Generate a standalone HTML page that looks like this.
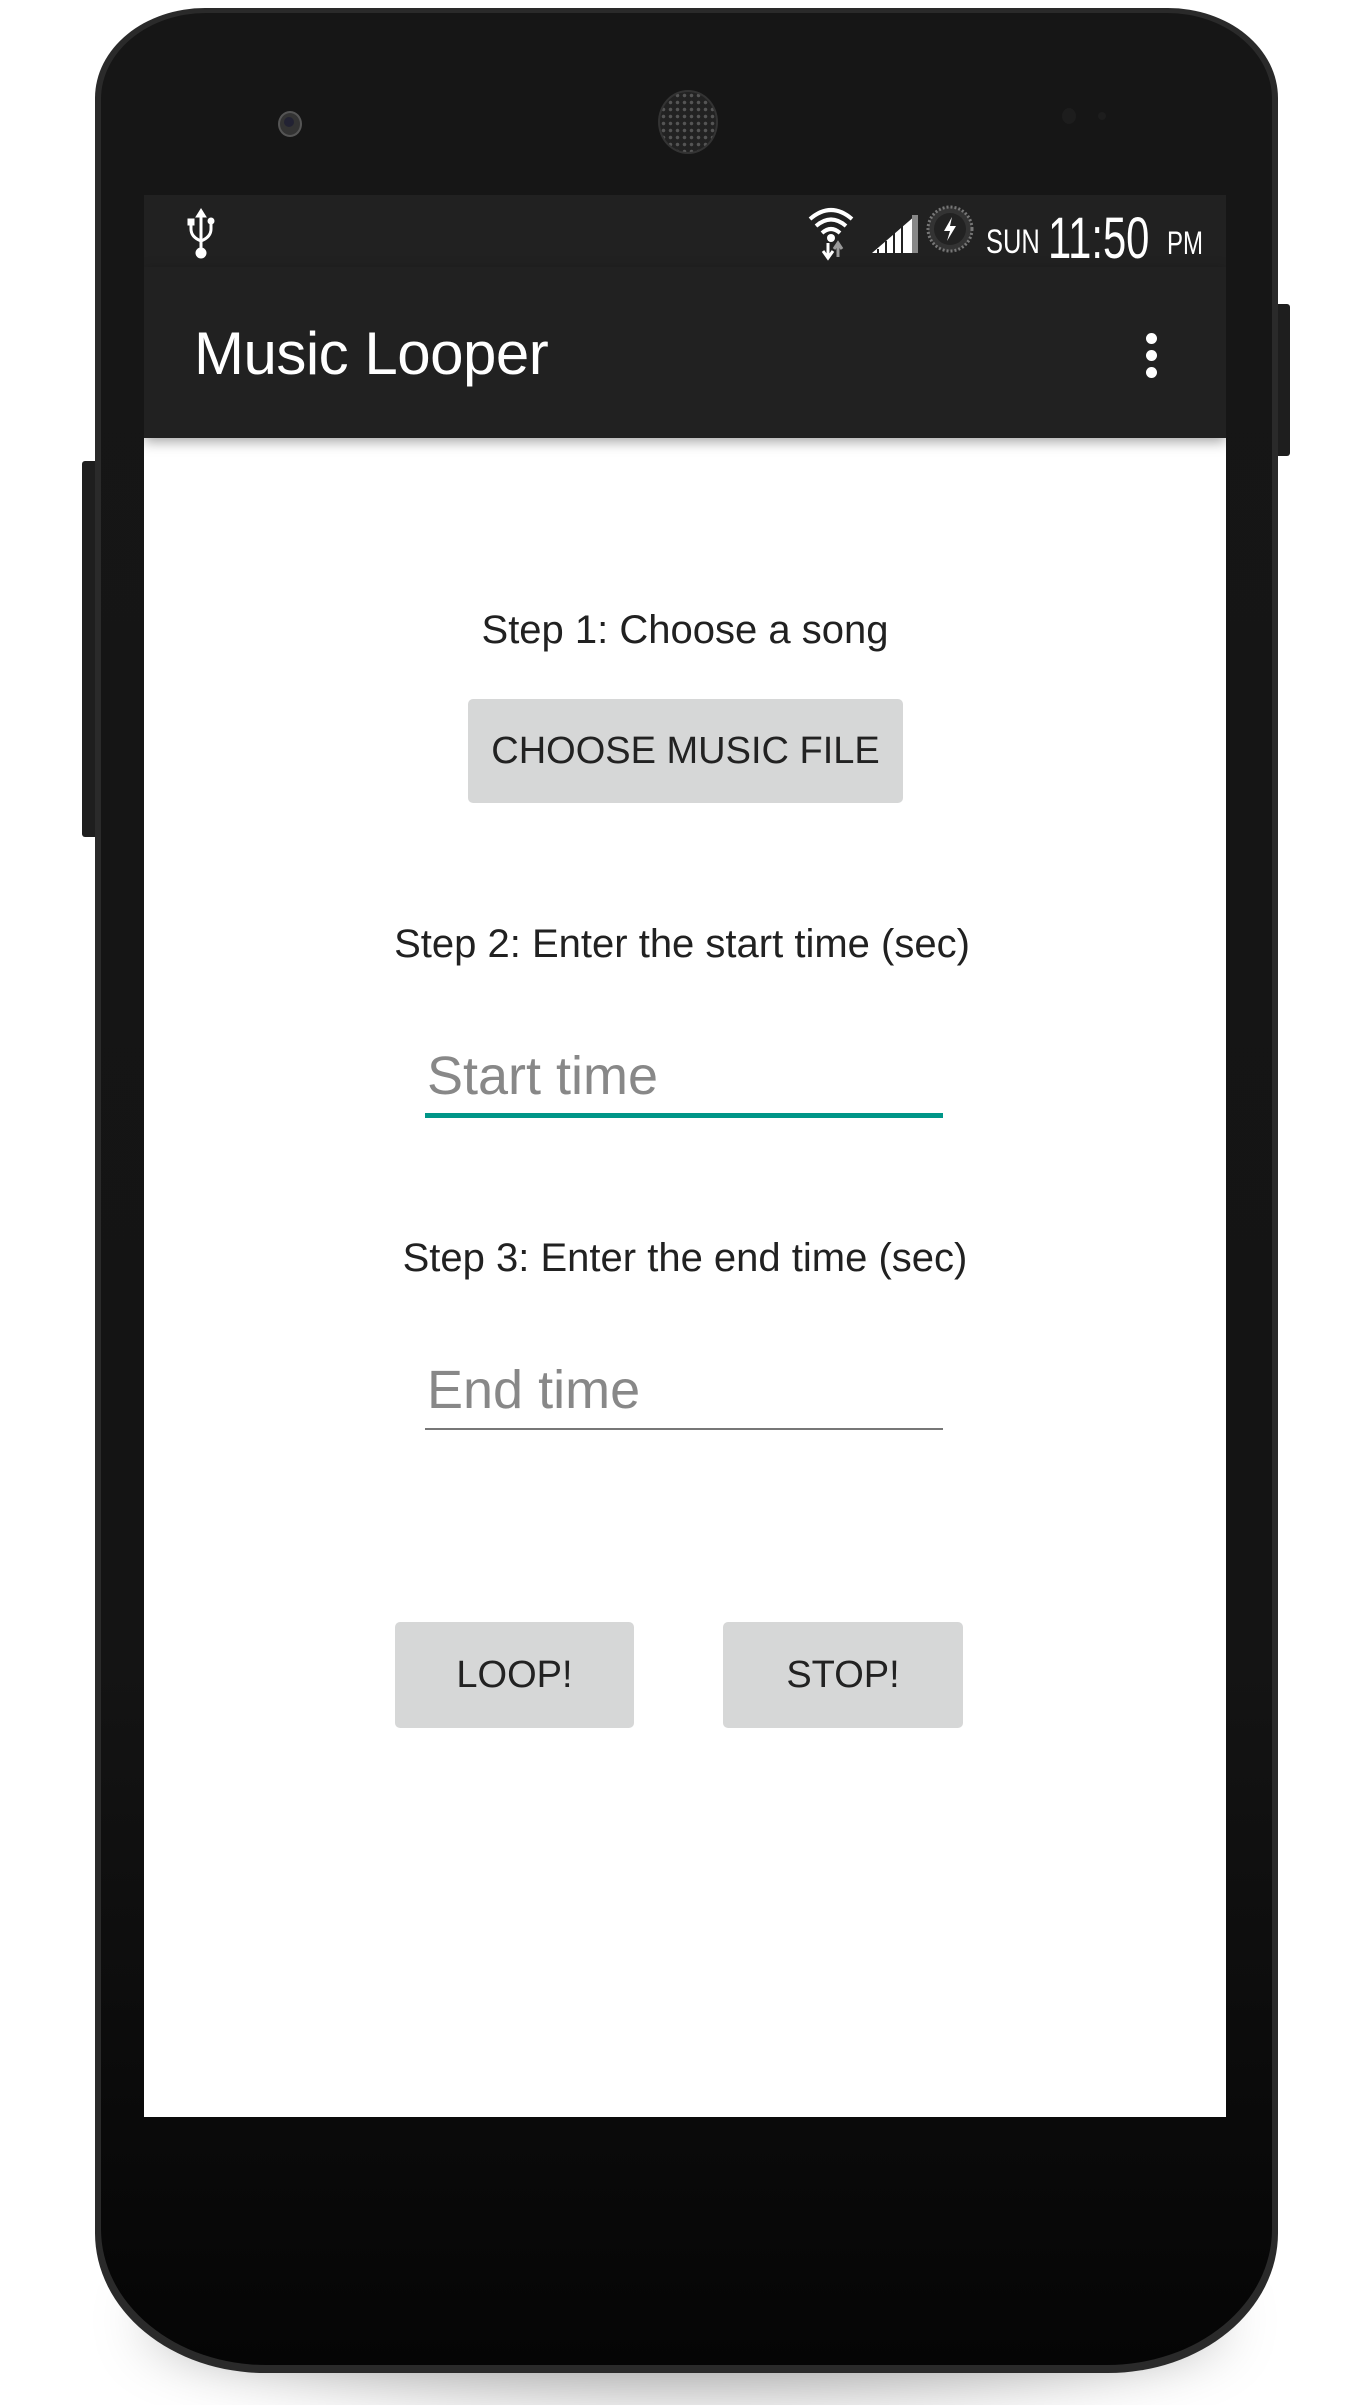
<!DOCTYPE html>
<html><head><meta charset="utf-8"><style>
html,body{margin:0;padding:0;background:#fff;}
body{width:1370px;height:2405px;position:relative;overflow:hidden;font-family:"Liberation Sans",sans-serif;}
.abs{position:absolute;}
.shadow{left:150px;top:2250px;width:1070px;height:140px;border-radius:50%;background:rgba(0,0,0,0.35);filter:blur(30px);}
.body{left:95px;top:8px;width:1183px;height:2365px;background:#2a2a2a;border-radius:110px 110px 170px 170px / 90px 90px 140px 140px;}
.inner{left:101px;top:13px;width:1171px;height:2352px;background:linear-gradient(#161616 0%,#141414 70%,#050505 100%);border-radius:105px 105px 165px 165px / 86px 86px 136px 136px;}
.btnside{background:#1e1e1e;}
.screen{left:144px;top:195px;width:1082px;height:1922px;background:#fff;overflow:hidden;}
.status{left:0;top:0;width:1082px;height:72px;background:#212121;}
.action{left:0;top:72px;width:1082px;height:171px;background:#212121;box-shadow:0 4px 12px rgba(0,0,0,0.35);}
.txt{color:#212121;font-size:40px;text-align:center;width:1082px;left:0;}
.btn{background:#d6d7d7;border-radius:5px;color:#222;font-size:38px;text-align:center;}
.ph{color:#888;font-size:54px;}
</style></head><body>
<div class="abs shadow"></div>
<div class="abs btnside" style="left:1270px;top:304px;width:20px;height:152px;border-radius:3px;"></div>
<div class="abs btnside" style="left:82px;top:461px;width:20px;height:376px;border-radius:3px;"></div>
<div class="abs body"></div>
<div class="abs inner"></div>
<div class="abs" style="left:278px;top:111px;width:20px;height:22px;border-radius:50%;background:#333;border:2px solid #555;"></div>
<div class="abs" style="left:284px;top:117px;width:10px;height:10px;border-radius:50%;background:#223;"></div>
<div class="abs" style="left:658px;top:90px;width:56px;height:60px;border-radius:50%;background:radial-gradient(circle,#555 1.5px,#222 2px) 0 0/7px 7px;border:2px solid #333;"></div>
<div class="abs" style="left:1062px;top:108px;width:14px;height:16px;border-radius:50%;background:#1d1d1d;"></div>
<div class="abs" style="left:1098px;top:112px;width:8px;height:8px;border-radius:50%;background:#1d1d1d;"></div>

<div class="abs screen">
 <div class="abs status">
  <svg class="abs" style="left:42px;top:12px" width="30" height="54" viewBox="0 0 30 54"><g fill="#fff" stroke="#fff"><path d="M15 2 L10 10 H20 Z"/><line x1="15" y1="8" x2="15" y2="44" stroke-width="3"/><path d="M5 14 V22 Q5 30 15 34 Q25 30 25 22 V16" fill="none" stroke-width="3"/><rect x="2" y="12" width="6" height="6"/><circle cx="25" cy="14" r="3"/><circle cx="15" cy="46" r="5"/></g></svg>
  <svg class="abs" style="left:662px;top:10px" width="50" height="56" viewBox="0 0 50 56"><g fill="none" stroke="#fff" stroke-width="4"><path d="M4 14 Q25 -4 46 14"/><path d="M10 21 Q25 8 40 21"/><path d="M16 28 Q25 20 34 28"/></g><circle cx="25" cy="33" r="4" fill="#fff"/><path d="M22 38 V52 M17 46 L22 53 L27 46" stroke="#fff" stroke-width="3" fill="none"/><path d="M32 52 V40 M28 44 L32 38 L36 44" stroke="#999" stroke-width="3" fill="none"/></svg>
  <svg class="abs" style="left:726px;top:18px" width="50" height="40" viewBox="0 0 50 40"><path d="M2 40 L46 2 V40 Z" fill="#fff"/><path d="M8 40 V36 M16 40 V28 M24 40 V20 M32 40 V13" stroke="#212121" stroke-width="2"/><rect x="42" y="2" width="6" height="38" fill="#888"/></svg>
  <svg class="abs" style="left:780px;top:8px" width="52" height="52" viewBox="0 0 52 52"><circle cx="26" cy="26" r="22" fill="#333" stroke="#777" stroke-width="3" stroke-dasharray="2 2"/><circle cx="26" cy="26" r="16" fill="#222"/><path d="M28 14 L20 28 H26 L23 38 L32 23 H26 Z" fill="#fff"/></svg>
  <div class="abs" style="left:842px;top:28px;color:#fff;font-size:34px;transform:scaleX(0.75);transform-origin:left;">SUN</div>
  <div class="abs" style="left:904px;top:10px;color:#fff;font-size:58px;transform:scaleX(0.72);transform-origin:left;">11:50</div>
  <div class="abs" style="left:1023px;top:30px;color:#fff;font-size:32px;transform:scaleX(0.75);transform-origin:left;">PM</div>
 </div>
 <div class="abs action">
  <div class="abs" style="left:50px;top:52px;color:#fff;font-size:60px;letter-spacing:-0.5px;">Music Looper</div>
  <div class="abs" style="left:1002px;top:66px;width:11px;height:11px;border-radius:50%;background:#fff;"></div>
  <div class="abs" style="left:1002px;top:83px;width:11px;height:11px;border-radius:50%;background:#fff;"></div>
  <div class="abs" style="left:1002px;top:100px;width:11px;height:11px;border-radius:50%;background:#fff;"></div>
 </div>
 <div class="abs txt" style="top:413px;">Step 1: Choose a song</div>
 <div class="abs btn" style="left:324px;top:504px;width:435px;height:104px;line-height:104px;">CHOOSE MUSIC FILE</div>
 <div class="abs txt" style="top:727px;left:-3px;">Step 2: Enter the start time (sec)</div>
 <div class="abs ph" style="left:283px;top:850px;">Start time</div>
 <div class="abs" style="left:281px;top:918px;width:518px;height:5px;background:#009688;"></div>
 <div class="abs txt" style="top:1041px;left:0px;">Step 3: Enter the end time (sec)</div>
 <div class="abs ph" style="left:283px;top:1164px;">End time</div>
 <div class="abs" style="left:281px;top:1233px;width:518px;height:2px;background:#777;"></div>
 <div class="abs btn" style="left:251px;top:1427px;width:239px;height:106px;line-height:106px;">LOOP!</div>
 <div class="abs btn" style="left:579px;top:1427px;width:240px;height:106px;line-height:106px;">STOP!</div>
</div>
</body></html>
